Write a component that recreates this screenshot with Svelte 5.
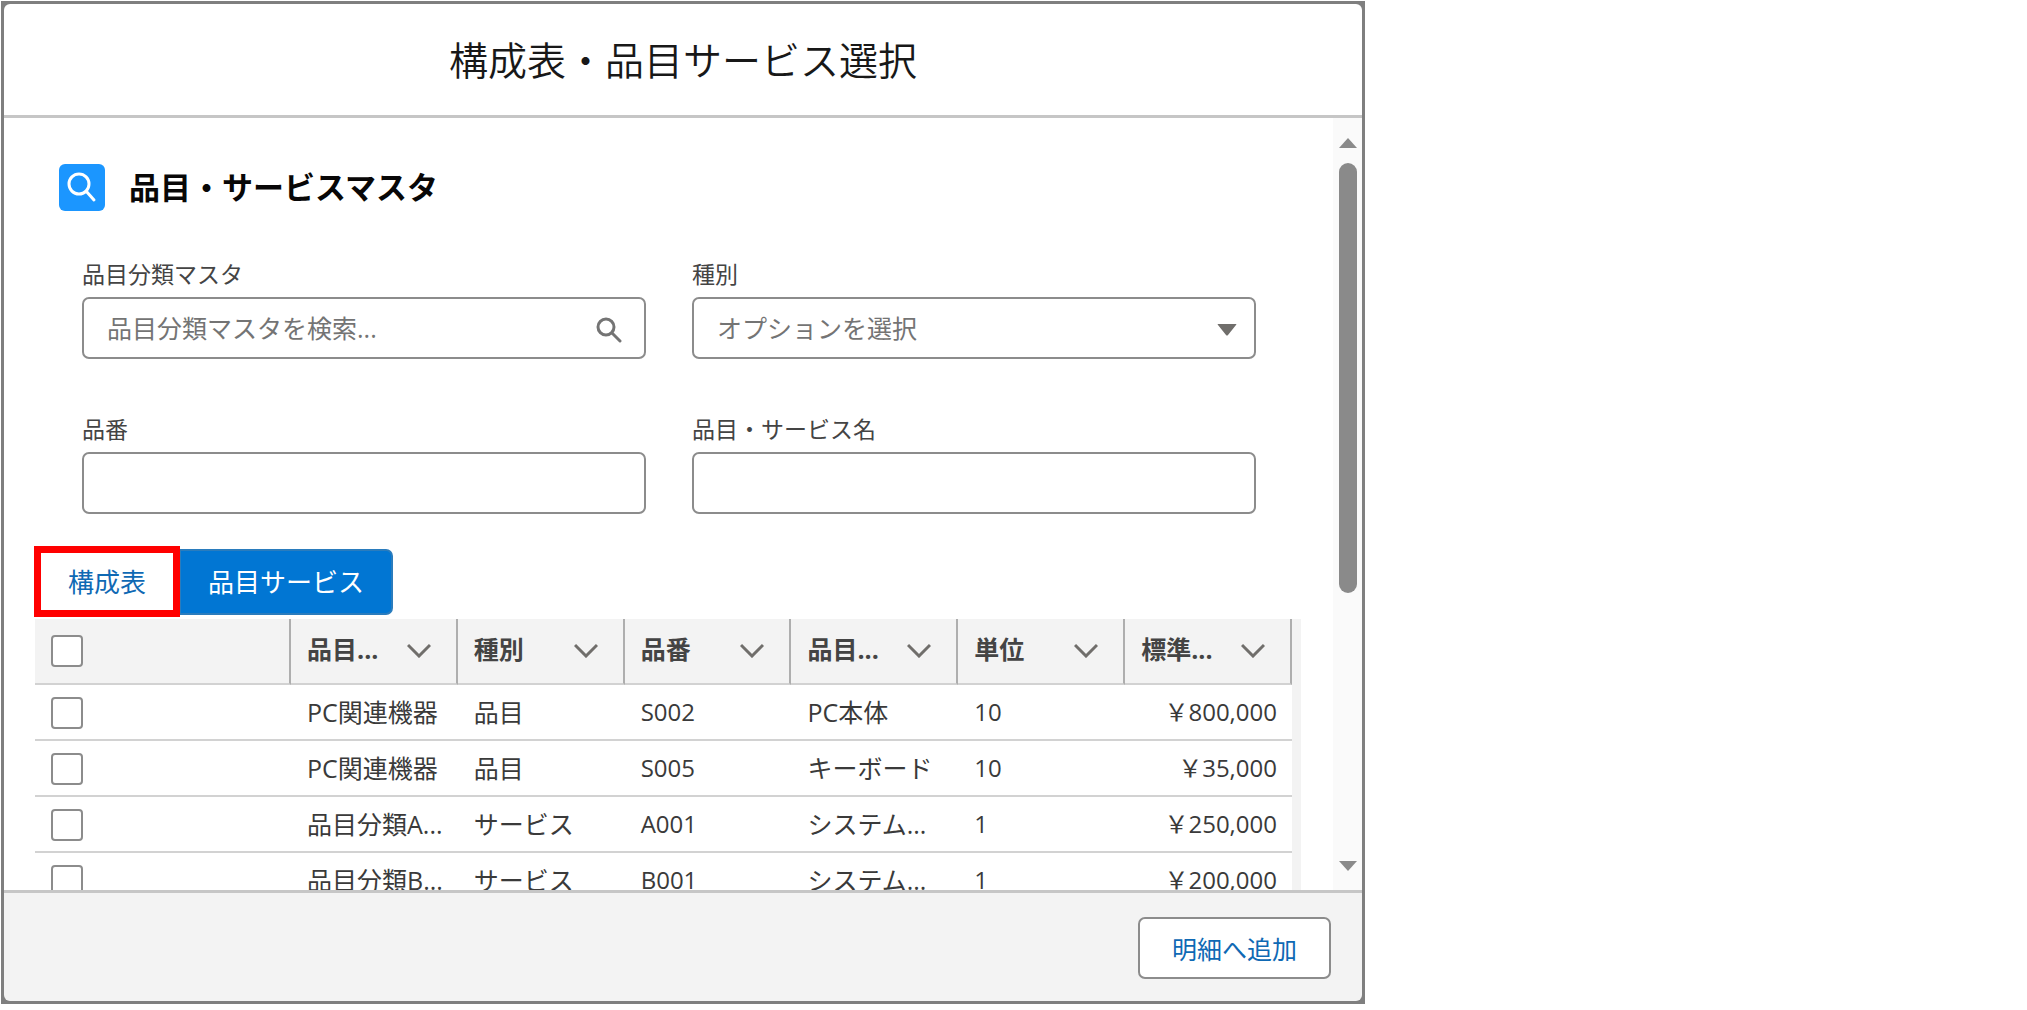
<script>
  let category = $state("");
  let kind = $state("");
  let itemNo = $state("");
  let itemName = $state("");
  let activeTab = $state("item");
  let selected = $state([]);

  const columns = ["品目...", "種別", "品番", "品目...", "単位", "標準..."];

  const rows = [
    { code: "S002", category: "PC関連機器", kind: "品目", name: "PC本体", unit: "10", price: "￥800,000" },
    { code: "S005", category: "PC関連機器", kind: "品目", name: "キーボード", unit: "10", price: "￥35,000" },
    { code: "A001", category: "品目分類A...", kind: "サービス", name: "システム...", unit: "1", price: "￥250,000" },
    { code: "B001", category: "品目分類B...", kind: "サービス", name: "システム...", unit: "1", price: "￥200,000" }
  ];

  let allSelected = $derived(selected.length === rows.length);

  function toggleAll() {
    selected = allSelected ? [] : rows.map((r) => r.code);
  }
</script>

<div class="modal" role="dialog" aria-labelledby="modal-title">
  <header class="modal-header">
    <h1 id="modal-title">構成表・品目サービス選択</h1>
  </header>

  <div class="modal-body">
    <div class="content">
      <div class="section-title">
        <span class="section-icon">
          <svg viewBox="0 0 46 47" width="46" height="47" aria-hidden="true">
            <circle cx="20" cy="20" r="10" />
            <path d="M27 27 L35 36" />
          </svg>
        </span>
        <h2>品目・サービスマスタ</h2>
      </div>

      <form class="filters" onsubmit={(e) => e.preventDefault()}>
        <div class="field">
          <label for="category">品目分類マスタ</label>
          <div class="control">
            <input id="category" type="text" placeholder="品目分類マスタを検索..." bind:value={category} />
            <svg class="search" viewBox="0 0 26 30" width="26" height="30" aria-hidden="true">
              <circle cx="10" cy="14" r="8" />
              <path d="M16 20 L24 28" />
            </svg>
          </div>
        </div>
        <div class="field">
          <label for="kind">種別</label>
          <div class="control">
            <select id="kind" bind:value={kind}>
              <option value="">オプションを選択</option>
              <option value="item">品目</option>
              <option value="service">サービス</option>
            </select>
            <svg class="caret" viewBox="0 0 20 18" width="20" height="18" aria-hidden="true">
              <path d="M1 5 H19 Q20 5 19 6 L11 16 Q10 17 9 16 L1 6 Q0 5 1 5 Z" />
            </svg>
          </div>
        </div>
        <div class="field">
          <label for="item-no">品番</label>
          <div class="control">
            <input id="item-no" type="text" bind:value={itemNo} />
          </div>
        </div>
        <div class="field">
          <label for="item-name">品目・サービス名</label>
          <div class="control">
            <input id="item-name" type="text" bind:value={itemName} />
          </div>
        </div>
      </form>

      <div class="tabs">
        <button class="tab marked" class:active={activeTab === "structure"} onclick={() => (activeTab = "structure")}>
          構成表
        </button>
        <button class="tab" class:active={activeTab === "item"} onclick={() => (activeTab = "item")}>
          品目サービス
        </button>
      </div>

      <div class="table-wrap">
        <table>
          <thead>
            <tr>
              <th class="check">
                <input type="checkbox" aria-label="すべて選択" checked={allSelected} onchange={toggleAll} />
              </th>
              {#each columns as column}
                <th>
                  <div class="th-inner">
                    <span>{column}</span>
                    <svg viewBox="0 0 24 18" width="24" height="18" aria-hidden="true">
                      <path d="M1 5 L12 16 L23 5" />
                    </svg>
                  </div>
                </th>
              {/each}
            </tr>
          </thead>
          <tbody>
            {#each rows as row (row.code)}
              <tr>
                <td class="check">
                  <input type="checkbox" aria-label={row.code} value={row.code} bind:group={selected} />
                </td>
                <td>{row.category}</td>
                <td>{row.kind}</td>
                <td class="num">{row.code}</td>
                <td>{row.name}</td>
                <td class="num">{row.unit}</td>
                <td class="num price">{row.price}</td>
              </tr>
            {/each}
          </tbody>
        </table>
      </div>
    </div>

    <div class="scrollbar" aria-hidden="true">
      <svg viewBox="0 0 18 10" width="18" height="10"><path d="M9 0 L18 10 H0 Z" /></svg>
      <div class="track"><div class="thumb"></div></div>
      <svg viewBox="0 0 18 10" width="18" height="10"><path d="M0 0 H18 L9 10 Z" /></svg>
    </div>
  </div>

  <footer class="modal-footer">
    <button class="add">明細へ追加</button>
  </footer>
</div>

<style>
  :global(body) {
    background: #fff;
  }
  .modal,
  .modal button,
  .modal input,
  .modal select {
    font-family: "Open Sans", "Noto Sans CJK JP", sans-serif;
    font-size: 25px;
  }
  .modal,
  .modal * {
    box-sizing: border-box;
  }
  .modal {
    display: flex;
    flex-direction: column;
    max-width: 1364px;
    height: calc(100vh - 7px);
    margin: 1px;
    border: 3px solid #7f7f7f;
    background: #7f7f7f;
    color: #444;
    overflow: hidden;
  }
  .modal-header {
    display: flex;
    align-items: center;
    justify-content: center;
    height: 114px;
    flex: none;
    border-bottom: 3px solid #c6c6c6;
    border-radius: 6px 6px 0 0;
    background: #fff;
  }
  h1,
  h2 {
    margin: 0;
  }
  h1 {
    font-size: 39px;
    font-weight: 350;
    line-height: 48px;
    color: #181818;
  }
  .modal-body {
    display: flex;
    flex: 1;
    min-height: 0;
    background: #fff;
  }
  .content {
    flex: 1;
    min-width: 0;
    padding: 46px 32px 0 31px;
    overflow: hidden;
  }
  .section-title {
    display: flex;
    align-items: center;
    gap: 24px;
    padding-left: 24px;
  }
  .section-icon {
    display: flex;
    border-radius: 6px;
    background: #1b96ff;
  }
  .section-icon svg {
    fill: none;
    stroke: #fff;
    stroke-width: 3;
    stroke-linecap: round;
  }
  h2 {
    font-size: 31px;
    line-height: 47px;
    font-weight: 700;
    color: #080707;
  }
  .filters {
    display: grid;
    grid-template-columns: 1fr 1fr;
    gap: 55px 46px;
    padding: 48px 45px 35px 47px;
  }
  .field {
    display: flex;
    flex-direction: column;
    gap: 8px;
    min-width: 0;
  }
  label {
    font-size: 23px;
    line-height: 30px;
  }
  .control {
    position: relative;
    display: flex;
    align-items: center;
    height: 62px;
    border: 2px solid #8c8c8c;
    border-radius: 7px;
    background: #fff;
  }
  .control input,
  .control select {
    flex: 1;
    min-width: 0;
    height: 100%;
    padding: 0 23px;
    border: none;
    outline: none;
    background: none;
    color: #747474;
    appearance: none;
  }
  .control input::placeholder {
    color: #747474;
    opacity: 1;
  }
  .search {
    margin-right: 22px;
    fill: none;
    stroke: #747474;
    stroke-width: 3;
    stroke-linecap: round;
  }
  .caret {
    position: absolute;
    right: 17px;
    fill: #706e6b;
    pointer-events: none;
  }
  .tabs {
    display: flex;
    margin-bottom: 4px;
  }
  .tabs .tab {
    position: relative;
    height: 66px;
    padding: 0 27px;
    border: 2px solid transparent;
    background: #fff;
    color: #0f69b4;
    font-size: 26px;
    line-height: 36px;
    cursor: pointer;
  }
  .tabs .marked {
    padding: 0 31px;
  }
  .tabs .tab:last-child {
    border-radius: 0 7px 7px 0;
  }
  .tabs .active {
    border-color: #2a7cbd;
    background: #0176d3;
    color: #fff;
  }
  .marked::after {
    content: "";
    position: absolute;
    inset: -5px -3px -4px -3px;
    border: 7px solid #f00;
    z-index: 1;
  }
  .table-wrap {
    padding-right: 9px;
    background: #f3f3f3;
  }
  table {
    width: 100%;
    table-layout: fixed;
    border-collapse: separate;
    border-spacing: 0;
    background: #fff;
  }
  th,
  td {
    padding: 0 15px 0 16px;
    text-align: left;
    white-space: nowrap;
    border-bottom: 2px solid #d2d2d2;
  }
  th {
    height: 66px;
    border-right: 2px solid #aeaeae;
    background: #f3f3f3;
    font-weight: 700;
  }
  td {
    height: 56px;
    line-height: 36px;
    color: #3a3a3a;
  }
  .check {
    width: 256px;
  }
  .check input {
    display: block;
    width: 32px;
    height: 32px;
    margin: 0;
    appearance: none;
    border: 2px solid #8c8c8c;
    border-radius: 4px;
    background: #fff;
  }
  td.check {
    padding-top: 2px;
  }
  .check input:checked {
    background: #0176d3;
  }
  .th-inner {
    display: flex;
    align-items: center;
    justify-content: space-between;
    padding: 0 10px 4px 0;
    line-height: 36px;
  }
  .th-inner svg {
    flex: none;
    fill: none;
    stroke: #706e6b;
    stroke-width: 3;
  }
  .num {
    font-size: 24px;
  }
  .price {
    text-align: right;
  }
  .scrollbar {
    display: flex;
    flex-direction: column;
    align-items: center;
    gap: 15px;
    width: 29px;
    padding: 20px 0 19px;
    background: #fafafa;
  }
  .scrollbar svg {
    flex: none;
    fill: #8a8a8a;
  }
  .track {
    flex: 1;
    width: 18px;
  }
  .thumb {
    height: 63%;
    border-radius: 9px;
    background: #8a8a8a;
  }
  .modal-footer {
    display: flex;
    align-items: center;
    justify-content: flex-end;
    flex: none;
    height: 111px;
    padding: 2px 31px 0;
    border-top: 3px solid #c6c6c6;
    border-radius: 0 0 6px 6px;
    background: #f3f3f3;
  }
  .add {
    height: 62px;
    padding: 0 32px;
    border: 2px solid #8c8c8c;
    border-radius: 7px;
    background: #fff;
    color: #0f69b4;
    cursor: pointer;
  }
</style>
